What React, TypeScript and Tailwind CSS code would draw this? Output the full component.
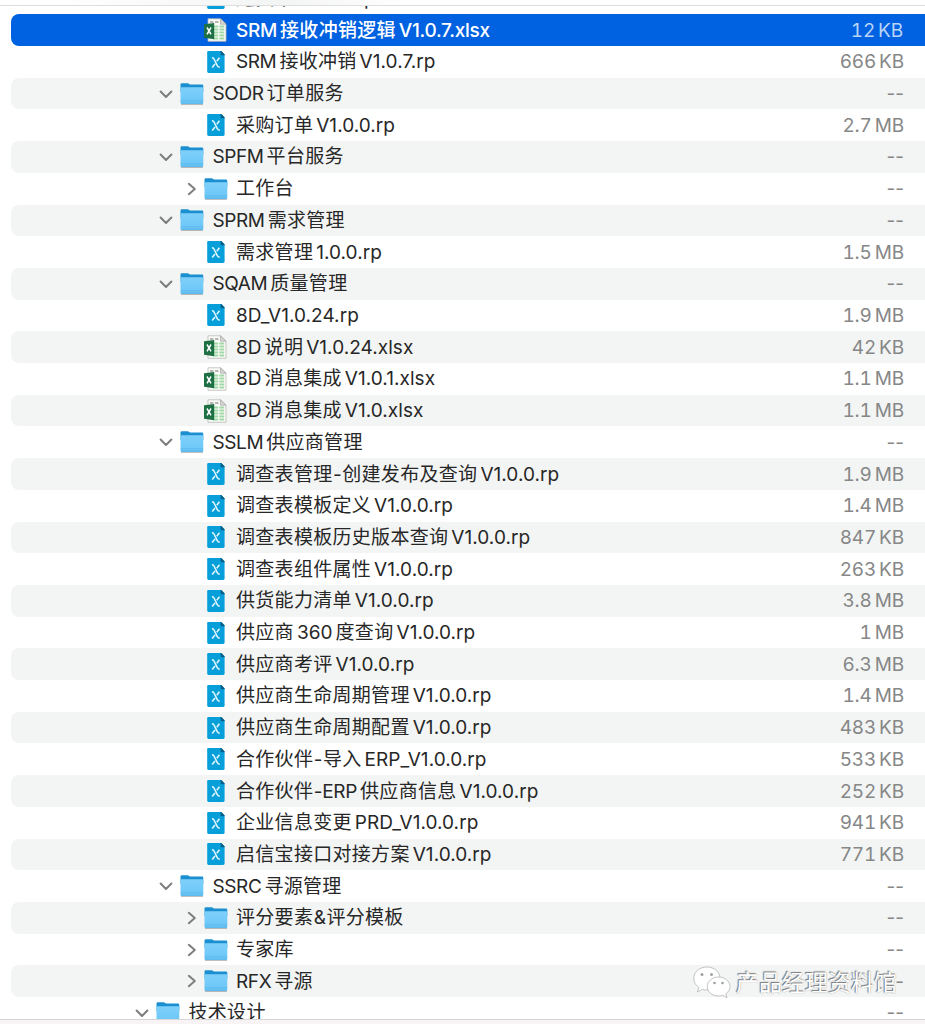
type Kind = "folder" | "rp" | "xlsx";

interface FileRow {
  name: string;
  size: string;
  kind: Kind;
  level: number;
  open?: boolean;
  selected?: boolean;
}

const FILES: FileRow[] = [
  { name: "送货单V1.0.0.rp", size: "", kind: "rp", level: 2 },
  { name: "SRM接收冲销逻辑V1.0.7.xlsx", size: "12 KB", kind: "xlsx", level: 2, selected: true },
  { name: "SRM接收冲销V1.0.7.rp", size: "666 KB", kind: "rp", level: 2 },
  { name: "SODR订单服务", size: "--", kind: "folder", level: 1, open: true },
  { name: "采购订单V1.0.0.rp", size: "2.7 MB", kind: "rp", level: 2 },
  { name: "SPFM平台服务", size: "--", kind: "folder", level: 1, open: true },
  { name: "工作台", size: "--", kind: "folder", level: 2 },
  { name: "SPRM需求管理", size: "--", kind: "folder", level: 1, open: true },
  { name: "需求管理1.0.0.rp", size: "1.5 MB", kind: "rp", level: 2 },
  { name: "SQAM质量管理", size: "--", kind: "folder", level: 1, open: true },
  { name: "8D_V1.0.24.rp", size: "1.9 MB", kind: "rp", level: 2 },
  { name: "8D说明V1.0.24.xlsx", size: "42 KB", kind: "xlsx", level: 2 },
  { name: "8D消息集成V1.0.1.xlsx", size: "1.1 MB", kind: "xlsx", level: 2 },
  { name: "8D消息集成V1.0.xlsx", size: "1.1 MB", kind: "xlsx", level: 2 },
  { name: "SSLM供应商管理", size: "--", kind: "folder", level: 1, open: true },
  { name: "调查表管理-创建发布及查询V1.0.0.rp", size: "1.9 MB", kind: "rp", level: 2 },
  { name: "调查表模板定义V1.0.0.rp", size: "1.4 MB", kind: "rp", level: 2 },
  { name: "调查表模板历史版本查询V1.0.0.rp", size: "847 KB", kind: "rp", level: 2 },
  { name: "调查表组件属性V1.0.0.rp", size: "263 KB", kind: "rp", level: 2 },
  { name: "供货能力清单V1.0.0.rp", size: "3.8 MB", kind: "rp", level: 2 },
  { name: "供应商360度查询V1.0.0.rp", size: "1 MB", kind: "rp", level: 2 },
  { name: "供应商考评V1.0.0.rp", size: "6.3 MB", kind: "rp", level: 2 },
  { name: "供应商生命周期管理V1.0.0.rp", size: "1.4 MB", kind: "rp", level: 2 },
  { name: "供应商生命周期配置V1.0.0.rp", size: "483 KB", kind: "rp", level: 2 },
  { name: "合作伙伴-导入ERP_V1.0.0.rp", size: "533 KB", kind: "rp", level: 2 },
  { name: "合作伙伴-ERP供应商信息V1.0.0.rp", size: "252 KB", kind: "rp", level: 2 },
  { name: "企业信息变更PRD_V1.0.0.rp", size: "941 KB", kind: "rp", level: 2 },
  { name: "启信宝接口对接方案V1.0.0.rp", size: "771 KB", kind: "rp", level: 2 },
  { name: "SSRC寻源管理", size: "--", kind: "folder", level: 1, open: true },
  { name: "评分要素&评分模板", size: "--", kind: "folder", level: 2 },
  { name: "专家库", size: "--", kind: "folder", level: 2 },
  { name: "RFX寻源", size: "--", kind: "folder", level: 2 },
  { name: "技术设计", size: "--", kind: "folder", level: 0, open: true },
];

const INDENT = ["pl-[122px]", "pl-[146px]", "pl-[169.5px]"];

function FolderIcon() {
  return (
    <svg width="24" height="24" viewBox="0 0 24 24">
      <defs>
        <linearGradient id="folder" x1="0" y1="0" x2="0" y2="1">
          <stop offset="0" stopColor="#7fd0fa" />
          <stop offset="0.75" stopColor="#6fc8f8" />
          <stop offset="1" stopColor="#5cb8ec" />
        </linearGradient>
      </defs>
      <path d="M1 21.8h22v1.2H1z" fill="#000" opacity="0.25" />
      <path d="M0.5 2.6Q0.5 1.2 1.8 1.2H7.6Q8.5 1.2 9.2 1.9L10 2.6H22Q23.3 2.6 23.3 3.9V10H0.5z" fill="#1b8fd0" />
      <path d="M0.5 6.2Q0.5 5.2 1.6 5.2H22.2Q23.3 5.2 23.3 6.2V20.7Q23.3 22.1 22 22.1H1.8Q0.5 22.1 0.5 20.7z" fill="url(#folder)" />
      <path d="M0.6 18.3H23.2" stroke="#4fb2ea" strokeWidth="0.6" opacity="0.7" />
    </svg>
  );
}

function RpIcon() {
  return (
    <svg width="24" height="24" viewBox="0 0 24 24">
      <path d="M4.2 1H17.2L20.6 4.5V21.6Q20.6 23 19.2 23H4.6Q3.2 23 3.2 21.6V2.2Q3.2 1 4.2 1z" fill="#079fda" />
      <path d="M16.6 1H17.4L20.6 4.5V5.3H17.6Q16.6 5.3 16.6 4.3z" fill="#075f88" />
      <path d="M8 8Q9.3 7.6 10 9L13.4 15.8Q14.1 17.4 15.8 16.9M15.4 7.8L12.8 11.2M11 14L8.2 17.4" fill="none" stroke="#dff5fd" strokeWidth="1.6" />
    </svg>
  );
}

function XlsxIcon() {
  return (
    <svg width="24" height="24" viewBox="0 0 24 24">
      <path d="M4 0.8H16.7L22 6V23.3H4z" fill="#fcfcfa" stroke="#b9b9b4" strokeWidth="0.8" />
      <path d="M16.5 0.8L22 6.2H16.5z" fill="#d7d7d3" stroke="#9b9b97" strokeWidth="0.6" />
      <path d="M6 4.1H9.5M11 4.1H14.5" stroke="#b5b5b2" strokeWidth="2" />
      <path
        d="M9 8.6H14.2M15.4 8.6H20.2M9 11.6H14.2M15.4 11.6H20.2M9 14.6H14.2M15.4 14.6H20.2M9 17.6H14.2M15.4 17.6H20.2M9 20.6H14.2M15.4 20.6H20.2"
        stroke="#a2d8a5"
        strokeWidth="2"
      />
      <path d="M0 6.2L10.2 5V21.2L0 19.8z" fill="#1d7044" />
      <path d="M3 9.5L7 16.3M7 9.5L3 16.3" stroke="#fff" strokeWidth="1.5" />
    </svg>
  );
}

function Chevron({ open }: { open?: boolean }) {
  return (
    <svg width="14" height="14" viewBox="0 0 14 14" fill="none" stroke="#7d7e7e" strokeWidth="2" strokeLinecap="round" strokeLinejoin="round">
      <path d={open ? "M1.6 4.5L7 10L12.4 4.5" : "M5.8 1.8L11.8 7L5.8 12.2"} />
    </svg>
  );
}

function runClass(run: string, selected?: boolean) {
  if (/[\u4e00-\u9fff]/.test(run)) return "tracking-[0.3px]";
  if (run === "-" || run === "&") return "-mx-[2.5px]";
  if (run.startsWith("-")) return "-ml-[2.5px] tracking-[-0.3px]";
  if (selected) return "tracking-[-0.3px]";
  return /\d/.test(run) ? "tracking-[0.05px]" : "tracking-[-0.4px]";
}

// Latin and Chinese runs are set in their own tracking, with a thin gap between them
function FileName({ name, selected }: { name: string; selected?: boolean }) {
  const runs = name.match(/[\u4e00-\u9fff]+|[^\u4e00-\u9fff]+/g) ?? [];
  return (
    <span className="ml-[8.5px] flex gap-[3px] pt-[1px] whitespace-nowrap">
      {runs.map((run, i) => (
        <span key={i} className={runClass(run, selected)}>{run}</span>
      ))}
    </span>
  );
}

function sizeClass(file: FileRow) {
  if (file.selected) return "pr-[1px] tracking-[-0.15px] tabular-nums text-[#b8d4f8]";
  return file.size === "--" ? "text-[#868787]" : "tracking-[-0.15px] tabular-nums text-[#868787]";
}

function Row({ file, striped }: { file: FileRow; striped: boolean }) {
  const color = file.selected
    ? "bg-[#0061e1] font-medium text-white"
    : striped
      ? "bg-[#f3f5f4] text-[#272727]"
      : "text-[#272727]";
  return (
    <div className={`ml-[11px] flex h-[31.71px] shrink-0 items-center rounded-l-lg pr-[21px] ${color} ${INDENT[file.level]}`}>
      <span className="flex w-[23px] items-center pl-[2px]">
        {file.kind === "folder" && <Chevron open={file.open} />}
      </span>
      {file.kind === "folder" ? <FolderIcon /> : file.kind === "rp" ? <RpIcon /> : <XlsxIcon />}
      <FileName name={file.name} selected={file.selected} />
      <span className={`ml-auto pt-[1px] font-normal whitespace-nowrap [word-spacing:-2px] ${sizeClass(file)}`}>
        {file.size}
      </span>
    </div>
  );
}

function Watermark() {
  return (
    <div className="absolute top-[966px] left-[693px] flex items-center gap-[5px]">
      <svg width="38" height="34" viewBox="0 0 38 34" fill="#fff" stroke="#b4b6b5" strokeWidth="0.8">
        <path d="M14 1C6.5 1 .8 6 .8 12.3C.8 16.2 2.6 19.3 5.8 21.5L4.4 26L9.3 23.4C11 23.9 12.5 24 14 24C21.3 24 27 19 27 12.5C27 6 21.3 1 14 1z" />
        <path d="M25.5 11C19.3 11 14.3 15.2 14.3 20.5C14.3 26 19.3 30 25.5 30C27 30 28.4 29.8 29.8 29.3L34 31.8L32.8 27.8C35.5 26 37 23.5 37 20.5C37 15.2 31.8 11 25.5 11z" />
        <g fill="#a0a2a1" stroke="none">
          <circle cx="9" cy="8.5" r="1.5" />
          <circle cx="18.5" cy="8.5" r="1.5" />
          <circle cx="21.5" cy="17" r="1.3" />
          <circle cx="29.5" cy="17" r="1.3" />
        </g>
      </svg>
      <span className="text-[23px] leading-[34px] whitespace-nowrap text-white [text-shadow:-1px_-1px_1px_#777,0_0_1px_#888]">
        产品经理资料馆
      </span>
    </div>
  );
}

export default function App() {
  return (
    <div className="relative flex h-[1024px] w-[925px] flex-col overflow-hidden bg-white font-['Inter','Noto_Sans_CJK_SC',sans-serif] text-[19px] leading-[30px]">
      <div className="h-[6px] shrink-0 border-b border-[#dededf] bg-linear-to-r from-white from-5% via-[#f3f5f4] via-30% to-white to-45%" />
      <div className="flex h-[1013px] shrink-0 flex-col overflow-hidden">
        <div className="-mt-[23.4px] flex flex-col">
          {FILES.map((file, i) => (
            <Row key={file.name} file={file} striped={i % 2 === 1} />
          ))}
        </div>
      </div>
      <div className="flex-1 border-t border-[#d8d6d7] bg-[#f8f4f5]" />
      <Watermark />
    </div>
  );
}
